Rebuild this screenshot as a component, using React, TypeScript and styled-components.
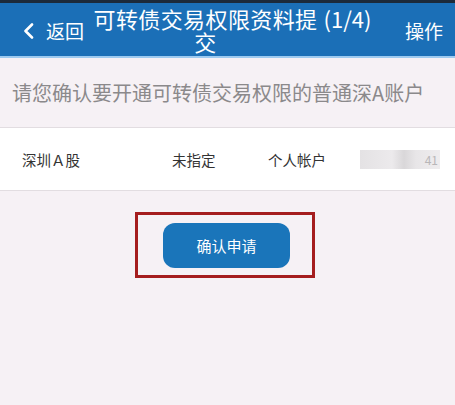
import React from 'react'
import styled, { createGlobalStyle } from 'styled-components'

const GlobalStyle = createGlobalStyle`
    html, body {
        margin: 0;
        padding: 0;
        background: #f6f1f5;
    }
    body {
        font-family: "Noto Sans CJK SC", "Noto Sans", sans-serif;
    }
`

const Page = styled.div`
    width: 455px;
    height: 405px;
    overflow: hidden;
    background: #f6f1f5;
    display: flex;
    flex-direction: column;
`

const StatusStrip = styled.div`
    height: 3px;
    background: #1c2a3a;
`

const Header = styled.header`
    height: 53px;
    background: #1b6fb7;
    border-bottom: 2px solid #9dcaf0;
    display: flex;
    align-items: center;
    padding: 0 12px 0 23px;
    color: #fff;
`

const BackLink = styled.div`
    display: flex;
    align-items: center;
    gap: 12px;
    font-size: 19px;
    width: 67px;
    margin-top: 2px;
`

const TitleWrap = styled.div`
    flex: 1;
    display: flex;
    justify-content: center;
    align-items: flex-start;
    gap: 4px;
    margin-left: -32px;
    margin-top: 1px;
`

const TitleText = styled.div`
    width: 228px;
    font-size: 22px;
    line-height: 23px;
    text-align: center;
    letter-spacing: 0.4px;
`

const Count = styled.span`
    font-size: 22px;
    line-height: 23px;
`

const Action = styled.div`
    font-size: 19px;
    margin-top: 2px;
`

const Notice = styled.div`
    height: 69px;
    display: flex;
    align-items: center;
    padding-left: 12px;
    font-size: 20px;
    color: #8b898b;
    border-bottom: 1px solid #e2dde1;
`

const AccountRow = styled.div`
    height: 62px;
    background: #fff;
    border-bottom: 1px solid #e2dde1;
    display: grid;
    grid-template-columns: 150px 96px 92px 1fr;
    align-items: center;
    padding-left: 22px;
    font-size: 14.5px;
    color: #333;
`

const Masked = styled.div`
    width: 80px;
    height: 19px;
    background: linear-gradient(90deg, #e4e2e4 0%, #eceaec 40%, #d9d7d9 55%, #e8e6e8 70%, #eeecee 100%);
    display: flex;
    justify-content: flex-end;
    align-items: center;
    color: #b8b6b8;
    font-size: 12px;
    padding-right: 2px;
    box-sizing: border-box;
`

const ButtonArea = styled.div`
    display: flex;
    justify-content: center;
    padding: 21px 5px 0 0;
`

const Highlight = styled.div`
    border: 3px solid #a51d1f;
    padding: 8px 22px 7px 25px;
`

const ConfirmButton = styled.button`
    width: 127px;
    height: 45px;
    border: none;
    border-radius: 12px;
    background: #1a75ba;
    color: #fff;
    font-family: inherit;
    font-size: 15px;
    cursor: pointer;
`

const Chevron = () => (
    <svg width="11" height="16" viewBox="0 0 11 16">
        <path d="M9 1.5 L2.5 8 L9 14.5" stroke="#fff" strokeWidth="2.6" fill="none" strokeLinecap="round" strokeLinejoin="round" />
    </svg>
)

export default function App() {
    return (
        <Page>
            <GlobalStyle />
            <StatusStrip />
            <Header>
                <BackLink>
                    <Chevron />
                    <span>返回</span>
                </BackLink>
                <TitleWrap>
                    <TitleText>可转债交易权限资料提交</TitleText>
                    <Count>(1/4)</Count>
                </TitleWrap>
                <Action>操作</Action>
            </Header>
            <Notice>请您确认要开通可转债交易权限的普通深A账户</Notice>
            <AccountRow>
                <span>深圳Ａ股</span>
                <span>未指定</span>
                <span>个人帐户</span>
                <Masked>41</Masked>
            </AccountRow>
            <ButtonArea>
                <Highlight>
                    <ConfirmButton>确认申请</ConfirmButton>
                </Highlight>
            </ButtonArea>
        </Page>
    )
}
